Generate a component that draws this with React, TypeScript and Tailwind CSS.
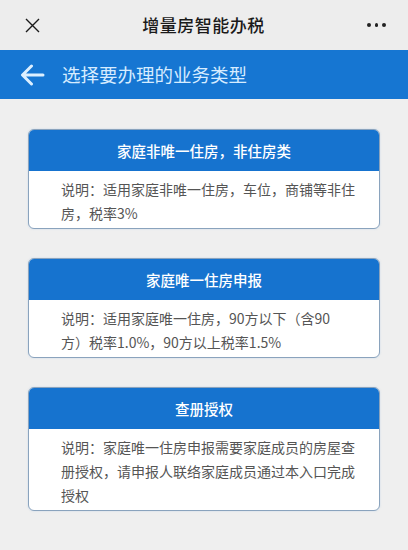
const cards = [
  {
    title: "家庭非唯一住房，非住房类",
    lines: ["说明：适用家庭非唯一住房，车位，商铺等非住", "房，税率3%"],
  },
  {
    title: "家庭唯一住房申报",
    lines: ["说明：适用家庭唯一住房，90方以下（含90", "方）税率1.0%，90方以上税率1.5%"],
  },
  {
    title: "查册授权",
    lines: [
      "说明：家庭唯一住房申报需要家庭成员的房屋查",
      "册授权，请申报人联络家庭成员通过本入口完成",
      "授权",
    ],
  },
];

export default function App() {
  return (
    <div
      className="w-[408px] h-[550px] bg-[#efefef] overflow-hidden"
      style={{ fontFamily: '"Noto Sans CJK SC", "Noto Sans", sans-serif' }}
    >
      {/* 顶部标题栏 */}
      <div className="h-[50px] bg-[#ededed] flex items-center justify-between pl-[25px] pr-[22px]">
        <svg width="15" height="15" viewBox="0 0 15 15" className="text-[#1a1a1a]">
          <path d="M1 1L14 14M14 1L1 14" stroke="currentColor" strokeWidth="1.4" fill="none" />
        </svg>
        <div className="text-[17px] font-medium text-[#1a1a1a] tracking-[0.5px]">增量房智能办税</div>
        <div className="flex items-center gap-[4px] w-[19px]">
          <span className="w-[3.5px] h-[3.5px] rounded-full bg-[#222]" />
          <span className="w-[3.5px] h-[3.5px] rounded-full bg-[#222]" />
          <span className="w-[3.5px] h-[3.5px] rounded-full bg-[#222]" />
        </div>
      </div>

      {/* 蓝色导航栏 */}
      <div className="h-[49px] bg-[#1676d2] flex items-center pl-[20px]">
        <svg width="25" height="22" viewBox="0 0 25 22" className="text-[#dcefff]">
          <path
            d="M23 11H3M11.5 2L2.5 11L11.5 20"
            stroke="currentColor"
            strokeWidth="3"
            strokeLinecap="round"
            strokeLinejoin="round"
            fill="none"
          />
        </svg>
        <div className="ml-[17px] text-[18.5px] text-[#d6ecff]">选择要办理的业务类型</div>
      </div>

      {/* 业务卡片 */}
      <div className="pt-[30px] px-[28px] flex flex-col gap-[29px]">
        {cards.map((c) => (
          <div
            key={c.title}
            className="rounded-[6px] border border-[#8aa3bd] bg-white overflow-hidden shadow-[0_0_2px_rgba(120,170,220,0.35)]"
          >
            <div className="h-[41px] bg-[#1673cf] flex items-center justify-center text-white text-[14.5px] font-medium">
              {c.title}
            </div>
            <div className="pl-[32px] pr-[16px] pt-[6px] pb-[3px] text-[14px] leading-[24px] text-[#555]">
              {c.lines.map((l) => (
                <div key={l} className="whitespace-nowrap">
                  {l}
                </div>
              ))}
            </div>
          </div>
        ))}
      </div>
    </div>
  );
}
